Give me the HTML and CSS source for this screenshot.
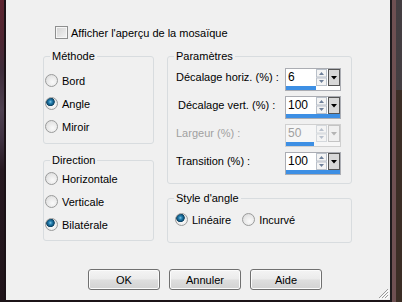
FILE: index.html
```html
<!DOCTYPE html>
<html lang="fr">
<head>
    <meta charset="UTF-8">
    <title>Mosaïque</title>
    <link rel="stylesheet" href="styles.css">
</head>
<body>
    <div class="screen">
        <div class="edge-left"></div>
        <div class="dialog">
            <label class="check-row"><span class="checkbox"></span>Afficher l'aperçu de la mosaïque</label>

            <div class="columns">
                <div class="col-left">
                    <div class="group group-method">
                        <div class="legend">Méthode</div>
                        <div class="radio-list">
                            <div class="radio-row"><span class="radio"></span>Bord</div>
                            <div class="radio-row"><span class="radio checked"></span>Angle</div>
                            <div class="radio-row"><span class="radio"></span>Miroir</div>
                        </div>
                    </div>
                    <div class="group group-direction">
                        <div class="legend">Direction</div>
                        <div class="radio-list">
                            <div class="radio-row"><span class="radio"></span>Horizontale</div>
                            <div class="radio-row"><span class="radio"></span>Verticale</div>
                            <div class="radio-row"><span class="radio checked"></span>Bilatérale</div>
                        </div>
                    </div>
                </div>

                <div class="col-right">
                    <div class="group group-params">
                        <div class="legend">Paramètres</div>
                        <div class="param-list">
                            <div class="param-row">
                                <span class="param-label">Décalage horiz. (%) :</span>
                                <div class="spin">
                                    <div class="spin-top">
                                        <span class="spin-value">6</span>
                                        <svg class="spin-arrows" width="11" height="17" viewBox="0 0 11 17"><rect x="0.5" y="0.5" width="10" height="7.5" fill="#f4f4f4" stroke="#b9c0c9"/><rect x="0.5" y="9" width="10" height="7.5" fill="#f4f4f4" stroke="#b9c0c9"/><path d="M3 6h5L5.5 3z" fill="#6d7f99"/><path d="M3 11h5l-2.5 3z" fill="#6d7f99"/></svg>
                                        <svg class="spin-drop" width="12" height="17" viewBox="0 0 12 17"><rect x="0.5" y="0.5" width="11" height="16" fill="#d8d8d8" stroke="#555"/><path d="M3 7h6l-3 3.5z" fill="#000"/></svg>
                                    </div>
                                    <div class="spin-bar"><span style="width: 30px"></span></div>
                                </div>
                            </div>
                            <div class="param-row">
                                <span class="param-label shifted">Décalage vert. (%) :</span>
                                <div class="spin">
                                    <div class="spin-top">
                                        <span class="spin-value">100</span>
                                        <svg class="spin-arrows" width="11" height="17" viewBox="0 0 11 17"><rect x="0.5" y="0.5" width="10" height="7.5" fill="#f4f4f4" stroke="#b9c0c9"/><rect x="0.5" y="9" width="10" height="7.5" fill="#f4f4f4" stroke="#b9c0c9"/><path d="M3 6h5L5.5 3z" fill="#6d7f99"/><path d="M3 11h5l-2.5 3z" fill="#6d7f99"/></svg>
                                        <svg class="spin-drop" width="12" height="17" viewBox="0 0 12 17"><rect x="0.5" y="0.5" width="11" height="16" fill="#d8d8d8" stroke="#555"/><path d="M3 7h6l-3 3.5z" fill="#000"/></svg>
                                    </div>
                                    <div class="spin-bar"><span style="width: 54px"></span></div>
                                </div>
                            </div>
                            <div class="param-row disabled">
                                <span class="param-label">Largeur (%) :</span>
                                <div class="spin">
                                    <div class="spin-top">
                                        <span class="spin-value">50</span>
                                        <svg class="spin-arrows" width="11" height="17" viewBox="0 0 11 17"><rect x="0.5" y="0.5" width="10" height="7.5" fill="#f4f4f4" stroke="#d4d8dc"/><rect x="0.5" y="9" width="10" height="7.5" fill="#f4f4f4" stroke="#d4d8dc"/><path d="M3 6h5L5.5 3z" fill="#b8c0cc"/><path d="M3 11h5l-2.5 3z" fill="#b8c0cc"/></svg>
                                        <svg class="spin-drop" width="12" height="17" viewBox="0 0 12 17"><rect x="0.5" y="0.5" width="11" height="16" fill="#f0f0f0" stroke="#c4c4c4"/><path d="M3 7h6l-3 3.5z" fill="#b4b4b4"/></svg>
                                    </div>
                                    <div class="spin-bar"><span style="width: 28px"></span></div>
                                </div>
                            </div>
                            <div class="param-row">
                                <span class="param-label">Transition (%) :</span>
                                <div class="spin">
                                    <div class="spin-top">
                                        <span class="spin-value">100</span>
                                        <svg class="spin-arrows" width="11" height="17" viewBox="0 0 11 17"><rect x="0.5" y="0.5" width="10" height="7.5" fill="#f4f4f4" stroke="#b9c0c9"/><rect x="0.5" y="9" width="10" height="7.5" fill="#f4f4f4" stroke="#b9c0c9"/><path d="M3 6h5L5.5 3z" fill="#6d7f99"/><path d="M3 11h5l-2.5 3z" fill="#6d7f99"/></svg>
                                        <svg class="spin-drop" width="12" height="17" viewBox="0 0 12 17"><rect x="0.5" y="0.5" width="11" height="16" fill="#d8d8d8" stroke="#555"/><path d="M3 7h6l-3 3.5z" fill="#000"/></svg>
                                    </div>
                                    <div class="spin-bar"><span style="width: 54px"></span></div>
                                </div>
                            </div>
                        </div>
                    </div>
                    <div class="group group-style">
                        <div class="legend">Style d'angle</div>
                        <div class="radio-inline">
                            <div class="radio-row"><span class="radio checked"></span>Linéaire</div>
                            <div class="radio-row"><span class="radio"></span>Incurvé</div>
                        </div>
                    </div>
                </div>
            </div>

            <div class="buttons">
                <button class="btn">OK</button>
                <button class="btn">Annuler</button>
                <button class="btn">Aide</button>
            </div>

            <!-- size grip -->
            <svg class="grip" width="12" height="12" viewBox="0 0 12 12">
                <path d="M11 2L2 11M11 5L5 11M11 8L8 11" stroke="#9a9a9a" stroke-width="1"/>
                <path d="M12 3L3 12M12 6L6 12M12 9L9 12" stroke="#ffffff" stroke-width="1"/>
            </svg>
        </div>
        <div class="edge-right"></div>
    </div>
</body>
</html>
```

FILE: styles.css
```css
* {
    box-sizing: border-box;
}
body {
    margin: 0;
    font-family: "Liberation Sans", Arial, sans-serif;
    font-size: 11px;
    color: #000;
}
.screen {
    display: flex;
    width: 402px;
    height: 302px;
    background: #1c1418;
    overflow: hidden;
}
.edge-left {
    width: 6px;
    height: 300px;
    border-right: 2px solid #1a1116;
    background: linear-gradient(#5e2530 0, #4e2632 40px, #3e2c3a 70px, #4e4050 110px, #3e3040 140px, #261820 170px, #20141a 300px);
}
.dialog {
    position: relative;
    width: 384px;
    height: 300px;
    background: #f0f0f0;
    padding: 26px 0 0 37px;
}
.edge-right {
    width: 12px;
    height: 302px;
    background:
        linear-gradient(to right, transparent 6px, rgba(70, 66, 72, 0.8) 6px) top / 100% 90px no-repeat,
        linear-gradient(to right, #1e1a1c 0, #1e1a1c 2px, #6e5052 2px, #6e5052 6px, #3b2d25 6px);
}

/* checkbox */
.check-row {
    display: flex;
    align-items: center;
    gap: 3px;
    height: 13px;
    margin-left: 12px;
}
.checkbox {
    width: 13px;
    height: 13px;
    border: 1px solid #8e8f8f;
    background: linear-gradient(135deg, #d2d2d2, #f4f4f4);
    box-shadow: inset 0 0 0 1px #f6f6f6;
}

/* group boxes */
.columns {
    display: flex;
    gap: 13px;
    margin-top: 17px;
}
.col-left {
    width: 111px;
}
.col-right {
    width: 185px;
}
.group {
    border: 1px solid #d8dcdf;
    border-radius: 3px;
}
.legend {
    width: fit-content;
    margin: -7px 0 0 6px;
    padding: 0 2px;
    line-height: 13px;
    background: #f0f0f0;
}
.group-method {
    height: 88px;
    margin-bottom: 16px;
}
.group-method .radio-list {
    padding-top: 6px;
}
.group-direction {
    height: 81px;
}
.group-params {
    height: 128px;
    margin-bottom: 14px;
}
.group-style {
    height: 45px;
}

/* radios */
.radio-list {
    padding-left: 1px;
}
.radio-row {
    display: flex;
    align-items: center;
    gap: 4px;
    height: 23px;
}
.radio {
    width: 13px;
    height: 13px;
    border-radius: 50%;
    border: 1px solid #9a9b9b;
    background: radial-gradient(circle at 60% 65%, #fafafa 0, #e6e6e6 60%, #d2d2d2 100%);
}
.radio.checked {
    background:
        radial-gradient(circle at 40% 35%, #8fcbe6 0, #2a86b6 1.5px, #135d88 3px, #0b3f5e 4px, transparent 4.6px),
        radial-gradient(circle at 60% 65%, #fafafa 0, #e6e6e6 60%, #d2d2d2 100%);
}
.radio-inline {
    display: flex;
    gap: 11px;
    padding: 3px 0 0 7px;
}

/* parameters */
.param-list {
    padding: 5px 9px 0 8px;
}
.param-row {
    display: flex;
    align-items: flex-start;
    height: 28px;
}
.param-label {
    width: 109px;
    margin-top: 1px;
    line-height: 17px;
}
.param-label.shifted {
    padding-left: 2px;
}
.disabled .param-label,
.disabled .spin-value {
    color: #a0a0a0;
}
.spin {
    width: 56px;
    height: 23px;
    border: 1px solid #abadb3;
    background: #fff;
}
.disabled .spin {
    border-color: #d0d0d0;
    background: #f6f6f6;
}
.spin-top {
    display: flex;
    height: 17px;
}
.spin-value {
    flex: 1;
    padding-left: 2px;
    line-height: 17px;
    font-size: 12px;
}
.spin-arrows {
    margin-right: 1px;
}
.spin-bar {
    height: 4px;
}
.spin-bar span {
    display: block;
    height: 4px;
    background: #3d8fe4;
}

/* buttons */
.buttons {
    display: flex;
    gap: 9px;
    margin: 26px 0 0 45px;
}
.btn {
    width: 72px;
    height: 21px;
    padding: 0;
    border: 1px solid #707070;
    border-radius: 3px;
    background: linear-gradient(#f4f4f4, #ebebeb 48%, #dedede 52%, #d2d2d2);
    box-shadow: inset 0 0 0 1px #fbfbfb;
    font-family: inherit;
    font-size: 11px;
    color: #000;
}

.grip {
    position: absolute;
    right: 1px;
    bottom: 1px;
}
```
